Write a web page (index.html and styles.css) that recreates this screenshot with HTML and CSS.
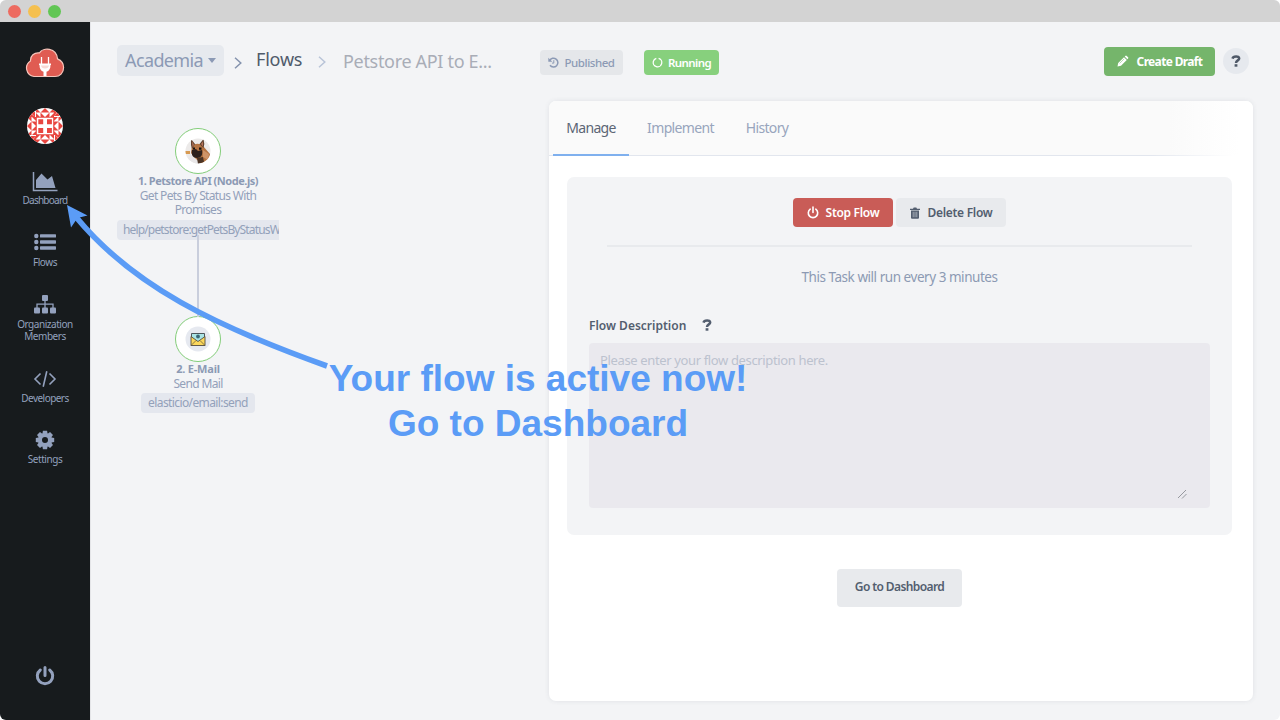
FILE: index.html
```html
<!DOCTYPE html>
<html lang="en">
<head>
<meta charset="utf-8">
<title>Flows</title>
<link rel="stylesheet" href="styles.css">
</head>
<body>
<div class="window">
  <div class="titlebar"><i class="dot red"></i><i class="dot yellow"></i><i class="dot green"></i></div>
  <div class="app">
    <nav class="sidebar">
      <svg class="logo" width="40" height="30" viewBox="0 0 40 30"><path d="M9 28.500a8.500 8.500 0 0 1-3.500-15.600c-.4-5.200 3.800-8.700 9-8 3.500-5.900 17-5.300 18 6 3.500 1.500 6.100 4.500 6.100 8.600 0 5.500-3.800 9-8.600 9z" fill="#e05c52" stroke="#f6c5bb" stroke-width="1.200"/><path d="M16.500 9v7M23.500 9v7" stroke="#fff" stroke-width="1.300"/><path d="M14 15.500h12v1.500h-.5c0 4-1.500 6-4 6.800v4.200h-3v-4.200c-2.500-.8-4-2.800-4-6.800h-.5z" fill="#fff"/><path d="M16 17.500h8c-.4 2-1.500 3-4 3s-3.600-1-4-3z" fill="#f8d9d5"/></svg>
      <svg class="avatar" width="36" height="36" viewBox="0 0 36 36"><defs><clipPath id="av"><circle cx="18" cy="18" r="18"/></clipPath></defs><g clip-path="url(#av)"><path fill="#fff" d="M0 0h36v36H0z"/><g fill="#e8453f"><g id="edge"><path d="M9 0l4.500 4.500H9zM13.500 4.500L18 9h-4.500zM18 0v4.500l-4.500 0zM9 9V5l4 4zM27 0l-4.500 4.500H27zM22.500 4.500L18 9h4.500zM18 0v4.500h4.500zM27 9V5l-4 4zM3 4l5 0v5zM3 9l5 0-5-4z"/></g><use href="#edge" transform="rotate(90 18 18)"/><use href="#edge" transform="rotate(180 18 18)"/><use href="#edge" transform="rotate(270 18 18)"/><path d="M9 9h18v18H9z"/></g><path fill="#fff" d="M9.800 9.800h16.400v16.400H9.800z"/><path fill="#e8453f" d="M11.300 11.300h4.900v4.900h-4.900zM20 11.300h4.900v4.900H20zM11.300 20h4.900v4.900h-4.900zM20 20h4.900v4.900H20z"/></g></svg>
      <a class="nav dash"><svg width="26" height="20" viewBox="0 0 26 20"><path d="M1.500 0v18.500h24" fill="none" stroke="currentColor" stroke-width="1.500"/><path d="M4 16V8l5.500-6.500 6 6L20 4l3.500 12z" fill="currentColor"/></svg><span>Dashboard</span></a>
      <a class="nav flows"><svg width="22" height="18" viewBox="0 0 22 18"><g fill="currentColor"><circle cx="2.300" cy="3" r="2.200"/><circle cx="2.300" cy="9" r="2.200"/><circle cx="2.300" cy="15" r="2.200"/><rect x="6" y="1.200" width="16" height="3.400" rx=".6"/><rect x="6" y="7.300" width="16" height="3.400" rx=".6"/><rect x="6" y="13.300" width="16" height="3.400" rx=".6"/></g></svg><span>Flows</span></a>
      <a class="nav org"><svg width="22" height="19" viewBox="0 0 22 19"><g fill="currentColor"><rect x="8" width="6" height="6" rx="1"/><rect y="12.500" width="6" height="6" rx="1"/><rect x="8" y="12.500" width="6" height="6" rx="1"/><rect x="16" y="12.500" width="6" height="6" rx="1"/></g><path d="M11 5v8M3 13V9.200h16V13" fill="none" stroke="currentColor" stroke-width="1.300"/></svg><span>Organization<br>Members</span></a>
      <a class="nav dev"><svg width="24" height="18" viewBox="0 0 24 18"><path d="M7.500 3.500L2 9l5.500 5.500M16.500 3.500L22 9l-5.500 5.500M13.800 1.200L10.200 16.800" fill="none" stroke="currentColor" stroke-width="1.600"/></svg><span>Developers</span></a>
      <a class="nav set"><svg width="20" height="20" viewBox="0 0 20 20"><g fill="currentColor"><path id="cog" d="M7.900 0.800h4.200l.6 4h-5.400zM7.900 19.200h4.200l.6-4h-5.400z"/><use href="#cog" transform="rotate(45 10 10)"/><use href="#cog" transform="rotate(90 10 10)"/><use href="#cog" transform="rotate(135 10 10)"/></g><circle cx="10" cy="10" r="5" fill="none" stroke="currentColor" stroke-width="4"/></svg><span>Settings</span></a>
      <svg class="power" width="20" height="22" viewBox="0 0 20 22"><path d="M5.300 5A7.700 7.700 0 1 0 14.700 5M10 2.500v8" fill="none" stroke="currentColor" stroke-width="3" stroke-linecap="round"/></svg>
    </nav>

    <main class="main">
      <header class="header">
        <div class="org-pill"><span>Academia</span><svg width="8" height="5" viewBox="0 0 8 5"><path d="M0 0h8L4 5z" fill="currentColor"/></svg></div>
        <svg class="chev one" width="8" height="12" viewBox="0 0 8 12"><path d="M1 .8L6.800 6 1 11.200" fill="none" stroke="#8593ae" stroke-width="1.500"/></svg>
        <a class="crumb">Flows</a>
        <svg class="chev two" width="8" height="12" viewBox="0 0 8 12"><path d="M1 .8L6.800 6 1 11.200" fill="none" stroke="#b9c4d8" stroke-width="1.500"/></svg>
        <span class="flow-name">Petstore API to E...</span>
        <span class="badge published"><svg width="11" height="11" viewBox="0 0 11 11"><path d="M1.600 3.500A4.400 4.400 0 1 1 2 8.300" fill="none" stroke="currentColor" stroke-width="1.500"/><path d="M.3.700v4h4z" fill="currentColor"/><path d="M5.800 3.200v2.900H4" fill="none" stroke="currentColor"/></svg><span>Published</span></span>
        <span class="badge running"><svg width="11" height="11" viewBox="0 0 11 11"><circle cx="5.500" cy="5.500" r="4.300" fill="none" stroke="currentColor" stroke-width="1.300" stroke-dasharray="24 3" transform="rotate(-75 5.500 5.500)"/></svg><span>Running</span></span>
        <button class="create"><svg width="12" height="12" viewBox="0 0 12 12"><path d="M.5 11.500l.7-3.500L7 2.200l2.800 2.800L4 10.800zM7.700 1.500l.9-.8q.6-.3 1.100.2L11.100 2.300q.5.500 0 1.100l-.7.900z" fill="currentColor"/><path d="M2.600 8.400l4.600-4.600" stroke="#9bcb92" stroke-width=".7"/></svg><span>Create Draft</span></button>
        <button class="help"><svg width="10" height="12" viewBox="0 0 10 12"><path d="M1.500 3.600C2.200.800 8.200.600 8.200 3.500 8.200 5.400 5 5.400 5 8" fill="none" stroke="currentColor" stroke-width="2.500"/><rect x="3.600" y="9.200" width="2.800" height="2.500" fill="currentColor"/></svg></button>
      </header>

      <div class="body">
        <section class="canvas">
          <i class="link"></i>
          <div class="node first">
            <div class="ring"><svg width="26" height="26" viewBox="0 0 26 26"><defs><clipPath id="dog"><circle cx="13" cy="13" r="12.500"/></clipPath></defs><g clip-path="url(#dog)"><path fill="#eceae9" d="M0 0h26v26H0z"/><path fill="#d79a52" d="M0 13h5v3H0z"/><path fill="#e9e7e8" d="M5 17l8 2 8 7H0z"/><path fill="#b57443" d="M7 8c2-3 9-3 11 0l7 8v6l-7 4-7-5-5-6z"/><path fill="#cf9468" d="M18 12l6 4-1 6-5-3z"/><path fill="#61422f" d="M6 1l4 5-3 5-1-4zM18.500 1L14.500 6l4 4 .8-4z"/><path fill="#b7745a" d="M7 3l2 4-1.500 2zM18 3.500L16 6l2 2.500z"/><path fill="#2d211d" d="M7 12l4-1 2 2 4-1c1 5-1 8-5 8s-6-3-5-8z"/><path fill="#15100f" d="M8 9.500h2v2H8zM14 9.500h2.500v2.200H14z"/><path fill="#4b3425" d="M12 20l6-1 1 5-6 2z"/></g></svg></div>
            <b class="n1">1. Petstore API (Node.js)</b><p class="d1">Get Pets By Status With</p><p class="d1b">Promises</p>
            <div class="tag long"><span>help/petstore:getPetsByStatusWithPromises</span></div>
          </div>
          <div class="node second">
            <div class="ring"><svg width="26" height="26" viewBox="0 0 26 26"><circle cx="13" cy="13" r="12.500" fill="#e6e9f0"/><path d="M6.500 7.500h13V17h-13z" fill="#a9e4e5" stroke="#40464d" stroke-width=".9"/><circle cx="13" cy="10.500" r="1.900" fill="#3b6777"/><path d="M6 10.500l7 5 7-5v9H6z" fill="#fbd75b" stroke="#514b40" stroke-width=".9"/><path d="M6 19.500l5-5M20 19.500l-5-5" stroke="#6d603d" stroke-width=".8"/></svg></div>
            <b class="n2">2. E-Mail</b><p class="d2">Send Mail</p>
            <div class="tag short"><span>elasticio/email:send</span></div>
          </div>
        </section>

        <section class="panel">
          <div class="tabs"><a class="tab active">Manage</a><a class="tab implement">Implement</a><a class="tab history">History</a></div>
          <div class="card">
            <div class="actions">
              <button class="stop"><svg width="12" height="13" viewBox="0 0 12 13"><path d="M3.200 3.200A4.700 4.700 0 1 0 8.800 3.200M6 1v5.500" fill="none" stroke="currentColor" stroke-width="1.600" stroke-linecap="round"/></svg><span>Stop Flow</span></button>
              <button class="delete"><svg width="10" height="12" viewBox="0 0 10 12"><path d="M0 1.700h3L3.700.500h2.600L7 1.700h3V3H0zM1 3.400h8v7.300q0 1-1 1H2q-1 0-1-1z" fill="currentColor"/><path d="M3.200 4.800v5.400M5 4.800v5.400M6.800 4.800v5.400" stroke="#d9dce0" stroke-width=".6"/></svg><span>Delete Flow</span></button>
            </div>
            <p class="schedule">This Task will run every 3 minutes</p>
            <div class="label"><span>Flow Description</span><svg width="10" height="12" viewBox="0 0 10 12"><path d="M1.500 3.600C2.200.800 8.200.600 8.200 3.500 8.200 5.400 5 5.400 5 8" fill="none" stroke="currentColor" stroke-width="2.500"/><rect x="3.600" y="9.200" width="2.800" height="2.500" fill="currentColor"/></svg></div>
            <div class="area"><span>Please enter your flow description here.</span><svg width="10" height="10" viewBox="0 0 10 10"><path d="M1 9l8-8M5 9.500L9.500 5" stroke="#8c8f94" stroke-width=".9"/></svg></div>
          </div>
          <button class="goto">Go to Dashboard</button>
        </section>
      </div>
    </main>
  </div>

  <svg class="arrow" width="1280" height="720" viewBox="0 0 1280 720"><path d="M76 217C133 286 215 326 327 366" fill="none" stroke="#5b9cf6" stroke-width="5.600"/><path d="M67 205l20.500 10.500-10 2.500-6.500 9.500z" fill="#5b9cf6"/></svg>
  <div class="callout"><div class="line1">Your flow is active now!</div><div class="line2">Go to Dashboard</div></div>
</div>
</body>
</html>
```
FILE: styles.css
```css
* { box-sizing: border-box; }
body { margin: 0; background: #fff; font-family: "Noto Sans", sans-serif; }
p { margin: 0; }
svg { display: block; flex: none; }
button { border: 0; padding: 0; font-family: inherit; display: flex; align-items: center; justify-content: center; }
span, a, b, p { white-space: nowrap; }

.window { position: relative; width: 1280px; height: 720px; overflow: hidden; border-radius: 6px; background: #f3f4f6; }
.titlebar { height: 22px; background: #d3d3d3; display: flex; align-items: center; gap: 7px; padding-left: 8px; }
.dot { width: 13px; height: 13px; border-radius: 50%; }
.red { background: #ed6b60; }
.yellow { background: #f5c04f; }
.green { background: #61c654; }
.app { display: flex; height: 698px; }

.sidebar { width: 90px; flex: none; background: #171b1d; color: #93a1bd; display: flex; flex-direction: column; align-items: center; }
.logo { margin-top: 26px; }
.avatar { margin-top: 30px; }
.nav { display: flex; flex-direction: column; align-items: center; font-size: 10px; line-height: 12px; text-align: center; letter-spacing: -.45px; }
.dash { margin-top: 28px; letter-spacing: -.75px; }
.dash svg { margin-bottom: 2px; }
.flows { margin-top: 27px; }
.flows svg { margin-bottom: 5px; }
.org { margin-top: 27px; }
.org svg { margin-bottom: 4px; }
.dev { margin-top: 28px; letter-spacing: -.55px; }
.dev svg { margin-bottom: 4px; }
.set { margin-top: 26px; }
.set svg { margin-bottom: 3px; }
.power { margin-top: auto; margin-bottom: 33px; }

.main { flex: 1; border-left: 1px solid #e4e5e8; }
.header { display: flex; align-items: flex-start; height: 79px; padding: 23px 31px 0 26px; }
.org-pill { width: 107px; height: 31px; border-radius: 5px; background: #e6e9ee; color: #8c9ab5; display: flex; align-items: center; gap: 5px; padding: 0 0 1px 8px; font-size: 18px; letter-spacing: -.62px; }
.chev.one { margin: 12px 0 0 10px; }
.crumb { width: 47px; margin: 2px 0 0 14px; font-size: 18px; line-height: 24px; letter-spacing: -.2px; color: #505b6b; }
.chev.two { margin: 11px 0 0 15px; }
.flow-name { width: 149px; margin: 4px 0 0 17px; font-size: 18px; line-height: 24px; letter-spacing: -.32px; color: #a9adb7; }
.badge { height: 25px; margin-top: 5px; border-radius: 4px; display: flex; align-items: center; justify-content: center; gap: 5px; font-size: 11.5px; }
.published { width: 83px; margin-left: 48px; background: #e5e7ea; color: #8c9ab5; font-weight: 500; letter-spacing: -.45px; }
.running { width: 75px; margin-left: 21px; background: #87d07d; color: #fff; font-weight: 600; letter-spacing: -.6px; padding-bottom: 1px; }
.create { width: 111px; height: 29px; margin: 2px 0 0 auto; border-radius: 4px; background: #75b56b; color: #fff; gap: 8px; font-size: 12px; font-weight: 700; letter-spacing: -.65px; padding-bottom: 1px; }
.help { width: 26px; height: 26px; margin: 3px 0 0 8px; border-radius: 50%; background: #e6e9ee; color: #4f5968; }

.body { display: flex; padding-left: 26px; }
.canvas { position: relative; width: 432px; flex: none; }
.node { position: absolute; left: 0; width: 162px; display: flex; flex-direction: column; align-items: center; color: #93a1ba; font-size: 12px; line-height: 14px; letter-spacing: -.65px; }
.first { top: 27px; }
.second { top: 215px; }
.ring { width: 46px; height: 46px; border: 1.5px solid #83cd79; border-radius: 50%; background: #fff; display: flex; align-items: center; justify-content: center; }
.node b { font-size: 11px; margin-bottom: 1px; color: #8c9ab4; letter-spacing: -.48px; }
.node .n2 { letter-spacing: -.2px; }
.tag { height: 20px; background: #e4e7ee; border-radius: 4px; display: flex; align-items: center; overflow: hidden; }
.long { width: 162px; margin-top: 3px; padding-left: 6px; border-radius: 4px 0 0 4px; letter-spacing: -.85px; }
.short { width: 114px; margin-top: 2px; justify-content: center; letter-spacing: -.6px; }
.link { position: absolute; left: 80px; top: 134px; width: 2px; height: 82px; background: #c9cedc; z-index: 1; }

.panel { width: 704px; height: 600px; background: #fff; border-radius: 7px; box-shadow: 0 0 5px rgba(60, 70, 90, .1); display: flex; flex-direction: column; align-items: center; }
.tabs { width: 704px; height: 55px; border-bottom: 1px solid #e2e6ee; border-image: linear-gradient(90deg, #e2e6ee 85%, #fff 97%) 1; display: flex; padding-left: 4px; gap: 4px; border-radius: 7px 7px 0 0; background: linear-gradient(90deg, #fafafa 88%, #fff 98%); color: #98a5bd; font-size: 14px; letter-spacing: -.65px; }
.tab { height: 55px; padding-bottom: 3px; display: flex; align-items: center; justify-content: center; }
.active { width: 76px; color: #5c6675; padding-bottom: 1px; border-bottom: 2px solid #7fb0ee; }
.implement { width: 95px; }
.history { width: 70px; }
.card { width: 665px; height: 358px; margin: 21px 0 0 -3px; border-radius: 7px; background: #f3f4f6; padding: 21px 22px 0; display: flex; flex-direction: column; }
.actions { display: flex; justify-content: center; gap: 3px; width: 585px; height: 49px; margin-left: 18px; padding-bottom: 19px; border-bottom: 2px solid #e8eaed; align-items: flex-start; }
.actions button { height: 29px; border-radius: 4px; font-size: 12px; font-weight: 600; letter-spacing: -.3px; }
.stop { width: 100px; background: #c95c57; color: #fff; gap: 7px; }
.delete { width: 110px; background: #e8eaed; color: #535e6f; gap: 8px; }
.schedule { margin-top: 20px; text-align: center; font-size: 13.5px; line-height: 20px; letter-spacing: -.46px; color: #8c9ab3; }
.label { display: flex; align-items: center; gap: 16px; height: 20px; margin-top: 28px; font-size: 12px; font-weight: 600; color: #535e6f; }
.area { display: flex; justify-content: space-between; width: 621px; height: 165px; margin-top: 8px; padding: 7px 23px 9px 11px; border-radius: 4px; background: #eae9ee; color: #bcc2ce; font-size: 13px; line-height: 20px; letter-spacing: -.36px; }
.area svg { align-self: flex-end; }
.goto { width: 125px; height: 38px; margin: 34px 0 0 -3px; border-radius: 4px; background: #e8eaed; color: #535e6f; font-size: 12px; font-weight: 600; letter-spacing: -.6px; padding-bottom: 3px; }

.arrow { position: absolute; left: 0; top: 0; z-index: 2; }
.callout { position: absolute; left: 320px; top: 356px; width: 436px; z-index: 3; text-align: center; font: bold 37px/45px "Liberation Sans", sans-serif; color: #5b9cf6; }
```
